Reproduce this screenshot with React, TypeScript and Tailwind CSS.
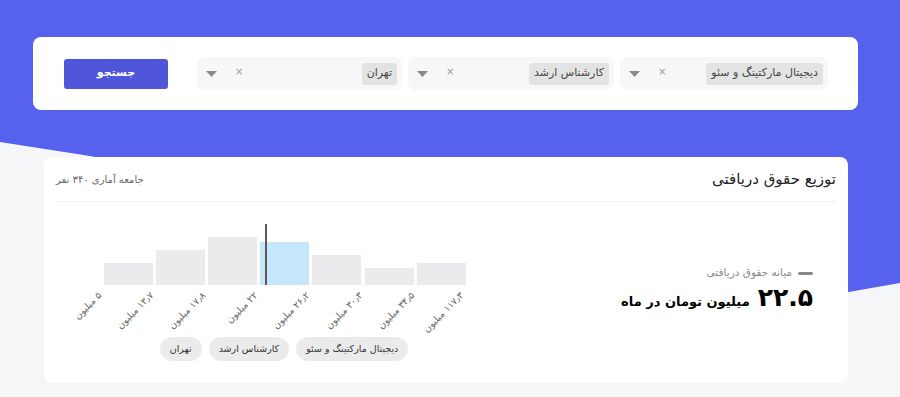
import React from "react";

const FONT = { fontFamily: '"DejaVu Sans", "Noto Sans", sans-serif' };

const filters = [
  { label: "دیجیتال مارکتینگ و سئو", width: "w-[208px]" },
  { label: "کارشناس ارشد", width: "w-[206px]" },
  { label: "تهران", width: "w-[205px]" },
];

const bars = [
  { x: 48, top: 49 },
  { x: 100, top: 36 },
  { x: 152, top: 23 },
  { x: 204, top: 28, active: true },
  { x: 256, top: 41 },
  { x: 309, top: 54 },
  { x: 361, top: 49 },
];

const ticks = [
  { x: 48, label: "۵ میلیون" },
  { x: 100, label: "۱۳٫۷ میلیون" },
  { x: 152, label: "۱۷٫۸ میلیون" },
  { x: 204, label: "۲۲ میلیون" },
  { x: 256, label: "۲۶٫۲ میلیون" },
  { x: 309, label: "۳۰٫۳ میلیون" },
  { x: 361, label: "۳۴٫۵ میلیون" },
  { x: 410, label: "۱۱۷٫۳ میلیون" },
];

const Caret = () => (
  <svg width="11" height="6" viewBox="0 0 11 6">
    <path d="M0 0 H11 L5.5 6 Z" fill="#8a8a8a" />
  </svg>
);

const FilterSelect = ({ label, width }: { label: string; width: string }) => (
  <div className={`${width} h-[33px] rounded-lg bg-[#f7f7f8] flex items-center pr-[5px] pl-[9px]`}>
    <span className="h-[22px] px-[5px] rounded-[3px] bg-[#e3e3e3] text-[11px] text-[#444] flex items-center whitespace-nowrap">
      {label}
    </span>
    <div className="flex-1" />
    <span className="text-[10px] text-[#999] leading-none ml-[18px] -mt-[3px]">×</span>
    <Caret />
  </div>
);

const Histogram = () => (
  <svg width="420" height="120" viewBox="0 0 420 120" className="block">
    {bars.map((b, i) => (
      <rect key={i} x={b.x} y={b.top} width="49" height={71 - b.top} fill={b.active ? "#c6e6fb" : "#ebeaec"} />
    ))}
    <rect x="209" y="10" width="2" height="61" fill="#5a5a5a" />
    {ticks.map((t, i) => (
      <text
        key={i}
        x={t.x - 2}
        y={82}
        fontSize="9.5"
        fill="#666"
        textAnchor="start"
        direction="rtl"
        transform={`rotate(-45 ${t.x - 2} 82)`}
        style={{ ...FONT, direction: "rtl" }}
      >
        {t.label}
      </text>
    ))}
  </svg>
);

export default function App() {
  return (
    <div dir="rtl" className="relative w-full h-[397px] overflow-hidden bg-[#f5f6f8]" style={FONT}>
      <svg className="absolute inset-0" width="900" height="397" viewBox="0 0 900 397">
        <polygon points="0,0 900,0 900,283 820,297 90,156 0,142" fill="#5661ee" />
      </svg>

      <div className="relative flex flex-col">
        {/* search bar */}
        <div className="mt-[37px] mr-[42px] ml-[33px] h-[73px] rounded-lg bg-white flex items-center pr-[30px] pl-[31px]">
          <div className="flex gap-[6px]">
            {filters.map((f) => (
              <FilterSelect key={f.label} label={f.label} width={f.width} />
            ))}
          </div>
          <div className="flex-1" />
          <button className="w-[104px] h-[30px] rounded-[3px] bg-[#4f56d9] text-white text-[11px] font-bold">
            جستجو
          </button>
        </div>

        {/* distribution card */}
        <div className="mt-[47px] mr-[52px] ml-[44px] h-[226px] rounded-lg bg-white flex flex-col">
          <div className="h-[45px] mx-[12px] flex items-center justify-between border-b border-[#f0f0f2]">
            <h2 className="text-[15px] text-[#222] pt-[1px]">توزیع حقوق دریافتی</h2>
            <span className="text-[10px] text-[#666]">جامعه آماری ۳۴۰ نفر</span>
          </div>

          <div className="flex flex-1">
            <div className="flex flex-col justify-center pr-[35px] pb-[6px]">
              <div className="flex items-center gap-[6px] text-[10.5px] text-[#888]">
                <span className="w-[15px] h-[3px] rounded bg-[#888]" />
                میانه حقوق دریافتی
              </div>
              <div className="flex items-baseline gap-[8px] mt-[1px] text-black font-bold">
                <span className="text-[25px] leading-[32px]">۲۲.۵</span>
                <span className="text-[13px]">میلیون تومان در ماه</span>
              </div>
            </div>

            <div className="flex-1" />

            <div className="w-[420px] ml-[12px] flex flex-col pt-[12px]">
              <div dir="ltr">
                <Histogram />
              </div>
              <div className="flex justify-center gap-[7px] mt-[3px] pl-[36px]">
                {filters.map((f) => (
                  <span
                    key={f.label}
                    className="h-[24px] px-[10px] rounded-full bg-[#ebebeb] text-[9.5px] text-[#333] flex items-center whitespace-nowrap"
                  >
                    {f.label}
                  </span>
                ))}
              </div>
            </div>
          </div>
        </div>
      </div>
    </div>
  );
}
